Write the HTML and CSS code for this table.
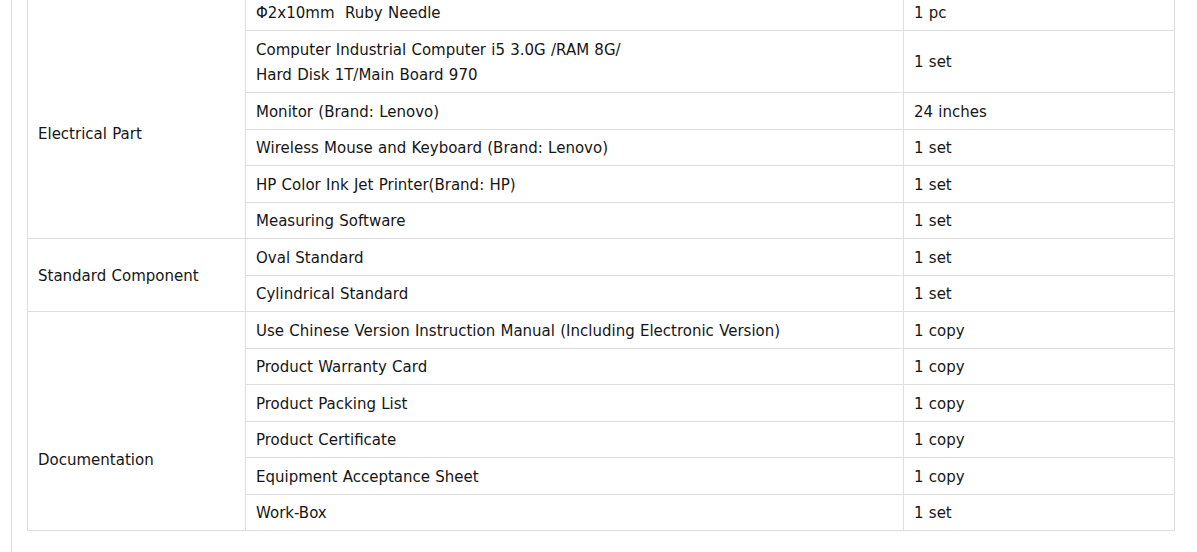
FILE: index.html
```html
<!DOCTYPE html>
<html>
<head>
<meta charset="utf-8">
<link rel="stylesheet" href="styles.css">
</head>
<body>
<div class="panel">
  <table class="spec">
    <colgroup>
      <col class="c1"><col class="c2"><col class="c3">
    </colgroup>
    <tbody>
      <tr>
        <td rowspan="6" class="group g-elec">Electrical Part</td>
        <td>Φ2x10mm&nbsp; Ruby Needle</td>
        <td>1 pc</td>
      </tr>
      <tr>
        <td>Computer Industrial Computer i5 3.0G /RAM 8G/<br>Hard Disk 1T/Main Board 970</td>
        <td>1 set</td>
      </tr>
      <tr><td>Monitor (Brand: Lenovo)</td><td>24 inches</td></tr>
      <tr><td>Wireless Mouse and Keyboard (Brand: Lenovo)</td><td>1 set</td></tr>
      <tr><td>HP Color Ink Jet Printer(Brand: HP)</td><td>1 set</td></tr>
      <tr><td>Measuring Software</td><td>1 set</td></tr>
      <tr>
        <td rowspan="2" class="group g-std">Standard Component</td>
        <td>Oval Standard</td><td>1 set</td>
      </tr>
      <tr><td>Cylindrical Standard</td><td>1 set</td></tr>
      <tr>
        <td rowspan="6" class="group g-doc">Documentation</td>
        <td>Use Chinese Version Instruction Manual (Including Electronic Version)</td><td>1 copy</td>
      </tr>
      <tr><td>Product Warranty Card</td><td>1 copy</td></tr>
      <tr><td>Product Packing List</td><td>1 copy</td></tr>
      <tr><td>Product Certificate</td><td>1 copy</td></tr>
      <tr><td>Equipment Acceptance Sheet</td><td>1 copy</td></tr>
      <tr><td>Work-Box</td><td>1 set</td></tr>
    </tbody>
  </table>
</div>
</body>
</html>
```

FILE: styles.css
```css
html, body {
  margin: 0;
  padding: 0;
  background: #fff;
  overflow: hidden;
}
body {
  font-family: "DejaVu Sans", Verdana, sans-serif;
  font-size: 15px;
  word-spacing: 0.5px;
  color: #161616;
}
.panel {
  margin: -6.2px 0 0 11px;
  width: 1175px;
  height: 600px;
  border-left: 1px solid #dedede;
  border-right: 1px solid #dedede;
  padding: 0 0 0 15px;
}
.spec {
  border-collapse: collapse;
  width: 1147px;
  table-layout: fixed;
}
.c1 { width: 218px; }
.c2 { width: 658px; }
.c3 { width: 271px; }
.spec td {
  border: 1px solid #dedede;
  padding: 6.55px 10px 3.75px;
  line-height: 25.2px;
  vertical-align: middle;
  text-align: left;
  white-space: nowrap;
}
.spec td.group {
  vertical-align: top;
}
.spec td.g-elec { padding-top: 126.85px; }
.spec td.g-std { vertical-align: middle; }
.spec td.g-doc { padding-top: 135.7px; }
```
